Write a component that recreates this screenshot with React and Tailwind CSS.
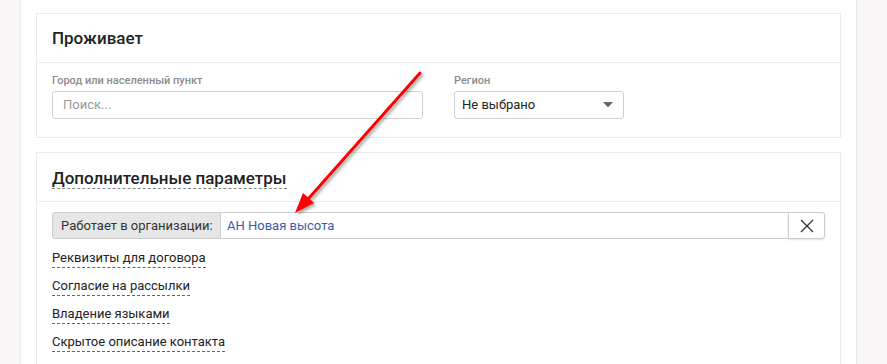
import React from "react";

const Caret = () => (
  <svg width="10" height="6" viewBox="0 0 10 6">
    <path d="M0 0h10L5 5.5z" fill="#666" />
  </svg>
);

const Cross = () => (
  <svg width="14" height="14" viewBox="0 0 14 14">
    <path d="M1 1l12 12M13 1L1 13" stroke="#333" strokeWidth="1.3" fill="none" />
  </svg>
);

const Arrow = () => (
  <svg className="pointer-events-none absolute left-0 top-0" width="887" height="364" viewBox="0 0 887 364">
    <defs>
      <filter id="sh" x="-20%" y="-20%" width="140%" height="140%">
        <feDropShadow dx="2" dy="2" stdDeviation="1.5" floodColor="#000" floodOpacity="0.35" />
      </filter>
    </defs>
    <g filter="url(#sh)">
      <line x1="420" y1="73" x2="309" y2="198" stroke="#ff0000" strokeWidth="3" strokeLinecap="round" />
      <path d="M295 213L314 203L303 193z" fill="#ff0000" />
    </g>
  </svg>
);

const links = [
  "Реквизиты для договора",
  "Согласие на рассылки",
  "Владение языками",
  "Скрытое описание контакта",
  "Дубликаты контакта",
];

export default function App() {
  return (
    <div className="relative flex h-screen overflow-hidden bg-[#f8f6f7] font-['Roboto',sans-serif] text-[#222]">
      <div className="w-[21px] shrink-0 border-r border-[#ececec]" />
      <main className="w-[835px] shrink-0 bg-white px-[15px] pt-[13px] flex flex-col gap-[14px]">
        {/* Проживает */}
        <section className="border border-[#ebebeb]">
          <div className="h-[49px] border-b border-[#ebebeb] px-[15px] flex items-center">
            <h2 className="text-[17px] font-medium leading-none">Проживает</h2>
          </div>
          <div className="px-[15px] pt-[11px] pb-[18px] flex gap-[31px]">
            <div className="flex flex-col gap-[3px]">
              <label className="text-[11px] leading-[14px] font-medium text-[#8c8c8c]">Город или населенный пункт</label>
              <div className="w-[371px] h-[28px] border border-[#cfcfcf] rounded-[3px] flex items-center px-[10px] text-[13px] text-[#999]">
                Поиск...
              </div>
            </div>
            <div className="flex flex-col gap-[3px]">
              <label className="text-[11px] leading-[14px] font-medium text-[#8c8c8c]">Регион</label>
              <div className="w-[170px] h-[28px] border border-[#cfcfcf] rounded-[3px] flex items-center justify-between pl-[7px] pr-[10px] text-[13px] text-[#222]">
                Не выбрано
                <Caret />
              </div>
            </div>
          </div>
        </section>

        {/* Дополнительные параметры */}
        <section className="border border-[#ebebeb] flex-1">
          <div className="h-[49px] border-b border-[#ebebeb] px-[15px] flex items-center">
            <h2 className="text-[17px] font-medium leading-[20px] border-b border-dashed border-[#888] mt-[3px]">
              Дополнительные параметры
            </h2>
          </div>
          <div className="px-[15px] pt-[10px]">
            <div className="flex h-[27px] w-[773px]">
              <div className="w-[169px] bg-[#e6e6e6] border border-[#cccccc] rounded-l-[3px] flex items-center pl-[8px] text-[13px] text-[#333]">
                Работает в организации:
              </div>
              <div className="flex-1 border-y border-[#cccccc] flex items-center pl-[6px] text-[13px] text-[#3b5aa8]">
                АН Новая высота
              </div>
              <button className="w-[37px] border border-[#cccccc] rounded-r-[3px] bg-white shadow-[0_1px_2px_rgba(0,0,0,0.12)] flex items-center justify-center">
                <Cross />
              </button>
            </div>
            <div className="flex flex-col items-start gap-[9px] mt-[10px]">
              {links.map((t) => (
                <span key={t} className="text-[13px] leading-[18px] text-[#222] border-b border-dashed border-[#666]">
                  {t}
                </span>
              ))}
            </div>
          </div>
        </section>
      </main>
      <div className="flex-1 border-l border-[#ececec]" />
      <Arrow />
    </div>
  );
}
